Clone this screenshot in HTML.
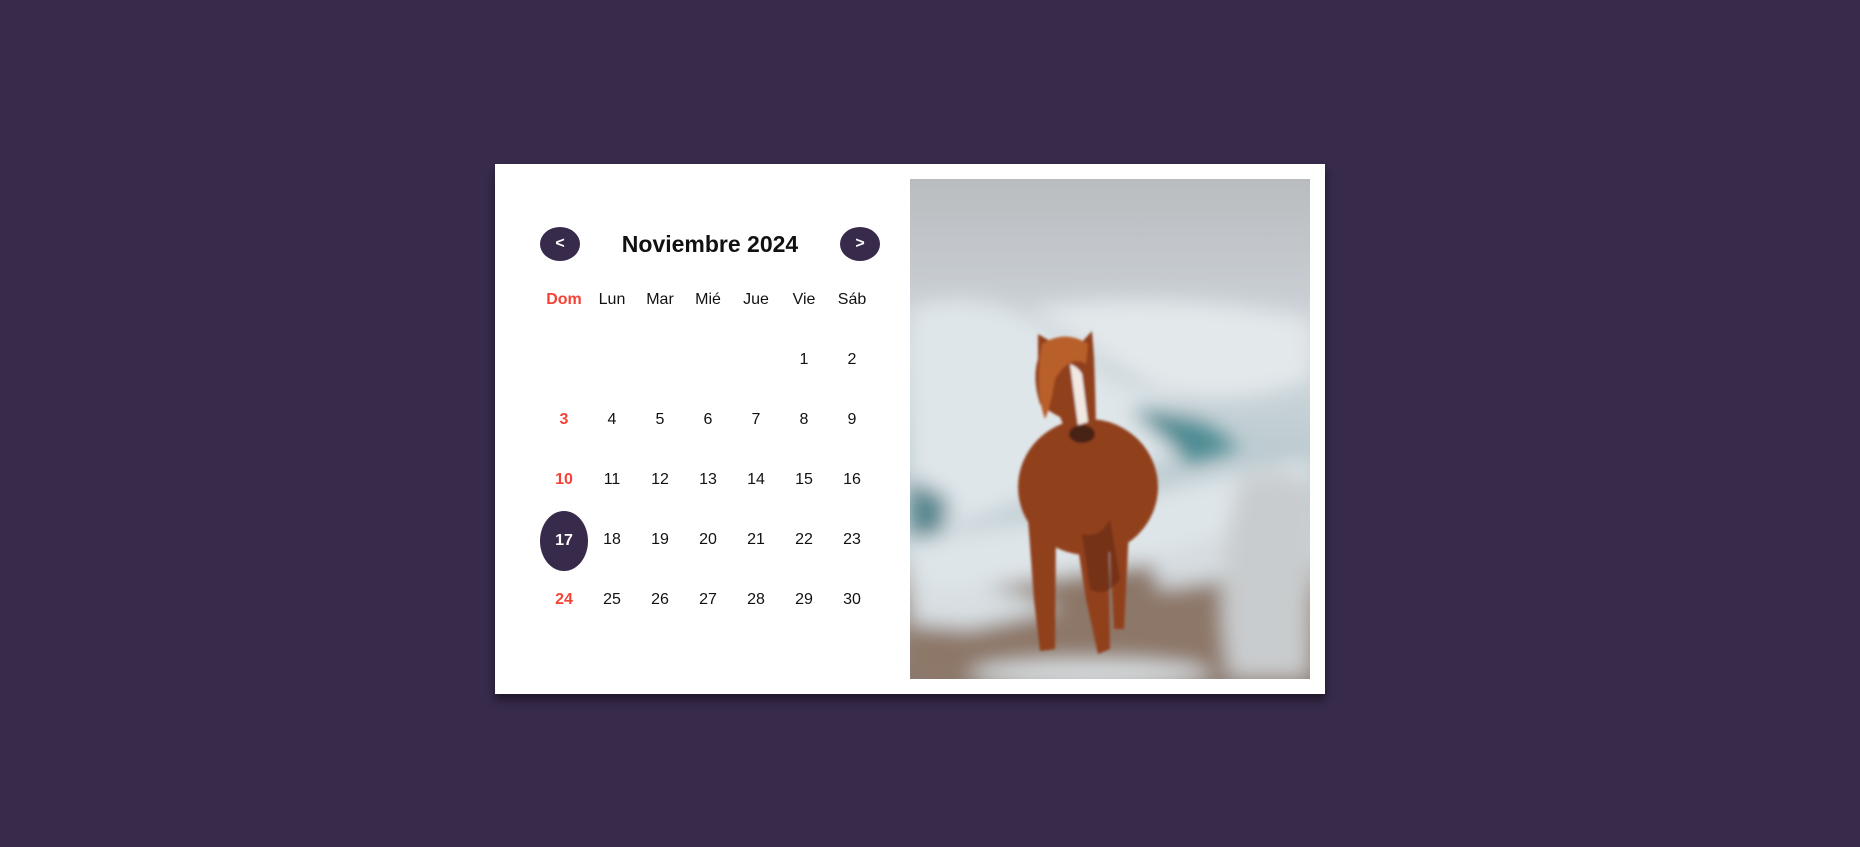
<!DOCTYPE html>
<html><head><meta charset="utf-8"><style>
html,body{margin:0;padding:0}
body{width:1860px;height:847px;background:#372a4b;position:relative;overflow:hidden;font-family:"Liberation Sans",Arial,sans-serif}
.card{position:absolute;left:495px;top:164px;width:830px;height:530px;background:#fff;box-shadow:0 6px 8px rgba(0,0,0,.45)}
.btn{position:absolute;top:227px;width:40px;height:34px;border-radius:50%;background:#372a4b;color:#fff;font-weight:bold;font-size:16px;text-align:center;line-height:34px}
.title{position:absolute;left:560px;width:300px;top:227px;height:34px;line-height:34px;text-align:center;font-size:23px;font-weight:bold;color:#111}
.c{position:absolute;width:48px;height:60px;margin-left:-24px;margin-top:-30px;text-align:center;line-height:60px;font-size:16px;color:#111}
.r{color:#f44336;font-weight:bold}
.sel{background:#372a4b;color:#fff;font-weight:bold;border-radius:50%}
svg{position:absolute;left:910px;top:179px}
</style></head><body>
<div class="card"></div>
<div class="btn" style="left:540px">&lt;</div>
<div class="title">Noviembre 2024</div>
<div class="btn" style="left:840px">&gt;</div>

<div class="c r" style="left:564px;top:300px">Dom</div>
<div class="c" style="left:612px;top:300px">Lun</div>
<div class="c" style="left:660px;top:300px">Mar</div>
<div class="c" style="left:708px;top:300px">Mié</div>
<div class="c" style="left:756px;top:300px">Jue</div>
<div class="c" style="left:804px;top:300px">Vie</div>
<div class="c" style="left:852px;top:300px">Sáb</div>

<div class="c" style="left:804px;top:360px">1</div>
<div class="c" style="left:852px;top:360px">2</div>

<div class="c r" style="left:564px;top:420px">3</div>
<div class="c" style="left:612px;top:420px">4</div>
<div class="c" style="left:660px;top:420px">5</div>
<div class="c" style="left:708px;top:420px">6</div>
<div class="c" style="left:756px;top:420px">7</div>
<div class="c" style="left:804px;top:420px">8</div>
<div class="c" style="left:852px;top:420px">9</div>

<div class="c r" style="left:564px;top:480px">10</div>
<div class="c" style="left:612px;top:480px">11</div>
<div class="c" style="left:660px;top:480px">12</div>
<div class="c" style="left:708px;top:480px">13</div>
<div class="c" style="left:756px;top:480px">14</div>
<div class="c" style="left:804px;top:480px">15</div>
<div class="c" style="left:852px;top:480px">16</div>

<div class="c sel" style="left:564px;top:541px">17</div>
<div class="c" style="left:612px;top:540px">18</div>
<div class="c" style="left:660px;top:540px">19</div>
<div class="c" style="left:708px;top:540px">20</div>
<div class="c" style="left:756px;top:540px">21</div>
<div class="c" style="left:804px;top:540px">22</div>
<div class="c" style="left:852px;top:540px">23</div>

<div class="c r" style="left:564px;top:600px">24</div>
<div class="c" style="left:612px;top:600px">25</div>
<div class="c" style="left:660px;top:600px">26</div>
<div class="c" style="left:708px;top:600px">27</div>
<div class="c" style="left:756px;top:600px">28</div>
<div class="c" style="left:804px;top:600px">29</div>
<div class="c" style="left:852px;top:600px">30</div>

<svg width="400" height="500" viewBox="0 0 400 500">
<defs>
<linearGradient id="sky" x1="0" y1="0" x2="0" y2="1">
<stop offset="0" stop-color="#b9bcbf"/><stop offset=".2" stop-color="#c6cbd0"/><stop offset=".35" stop-color="#d0d8dd"/><stop offset=".55" stop-color="#bccbd0"/><stop offset=".75" stop-color="#c7d2d6"/><stop offset=".85" stop-color="#9a8a80"/><stop offset="1" stop-color="#8a7a70"/>
</linearGradient>
<filter id="bl"><feGaussianBlur stdDeviation="10"/></filter>
<filter id="bl2"><feGaussianBlur stdDeviation="1.2"/></filter>
</defs>
<rect width="400" height="500" fill="url(#sky)"/>
<g filter="url(#bl)">
<path d="M0 130 Q60 110 120 140 L200 200 L260 220 L300 250 L260 280 L180 300 L0 360Z" fill="#dfe6ea"/>
<path d="M120 130 Q250 110 400 140 L400 200 Q320 230 250 210 Z" fill="#e3e8eb"/>
<path d="M0 300 L40 320 L30 360 L0 370Z" fill="#55858e"/>
<path d="M220 230 Q280 225 330 270 L280 285 Z" fill="#4b8a92"/>
<path d="M0 360 L120 345 L300 300 L400 280 L400 330 L300 380 L0 420Z" fill="#dee5e9"/>
<path d="M0 420 L400 360 L400 500 L0 500Z" fill="#8d7768"/>
<path d="M0 410 Q80 400 150 430 L60 450 L0 445Z" fill="#d8dfe3"/>
<path d="M240 380 Q300 360 330 350 L320 400 L250 410Z" fill="#d5dce0"/>
<path d="M330 300 Q400 280 400 320 L400 500 L320 500 Q300 400 330 300Z" fill="#c9ccce"/>
<ellipse cx="180" cy="495" rx="120" ry="15" fill="#d5dadd"/>
</g>
<g filter="url(#bl2)">
<g fill="#91401f">
<ellipse cx="178" cy="308" rx="70" ry="68"/>
<path d="M128 155 L140 162 Q158 158 172 163 L182 152 L184 178 Q186 230 186 262 Q172 272 160 262 L150 238 Q138 232 130 225 Q122 200 128 180 Z"/>
<path d="M118 340 L146 340 L145 470 L130 472 L124 420 Z"/>
<path d="M165 350 L198 350 L200 470 L188 475 L176 420 Z"/>
<path d="M198 330 L220 330 L214 450 L204 450Z"/>
</g>
<path d="M172 355 Q190 360 200 340 L210 400 Q195 420 180 410Z" fill="#5a2412" opacity=".5"/>
<path d="M132 165 Q155 150 178 165 L176 185 Q160 175 145 200 Q140 230 135 240 Q124 210 132 165Z" fill="#b95e2c"/>
<path d="M160 185 Q168 188 172 195 L178 243 L168 246 Z" fill="#f1e8e1"/>
<ellipse cx="172" cy="255" rx="13" ry="9" fill="#4a2418"/>
</g>
</svg>
</body></html>
